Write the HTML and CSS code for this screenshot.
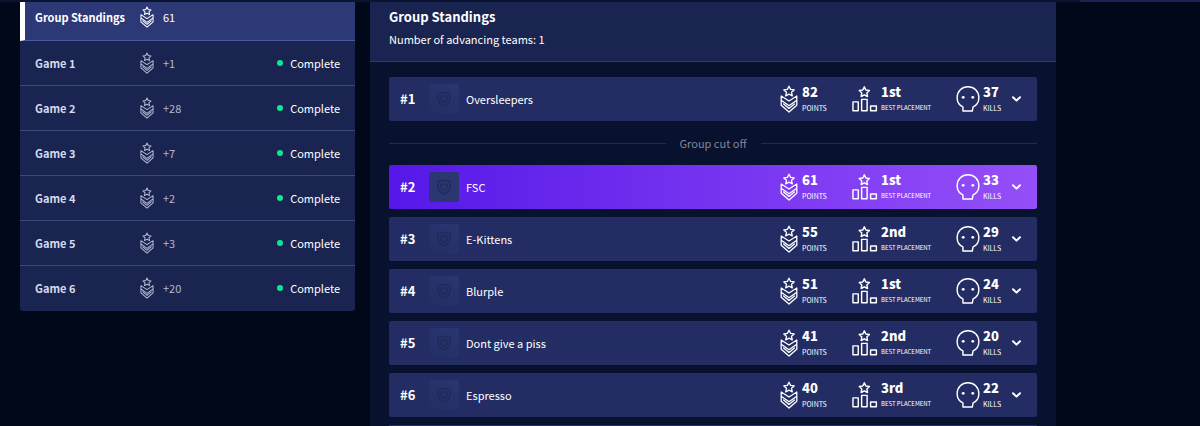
FILE: index.html
```html
<!DOCTYPE html>
<html lang="en">
<head>
<meta charset="utf-8">
<meta name="viewport" content="width=device-width, initial-scale=1">
<title>Group Standings</title>
<link rel="stylesheet" href="styles.css">
</head>
<body>
<svg class="sprite" aria-hidden="true">
  <symbol id="points" viewBox="0 0 18 28">
    <path d="M9 1.200l1.600 3.200 3.600.5-2.700 2.400.8 3.600L9 9.100l-3.300 1.800.8-3.600-2.700-2.400 3.600-.5z"/>
    <path d="M1.200 11v9.200L9 27l7.800-6.800V11L9 16zM1.200 15.200L9 20.800l7.800-5.600M3.600 18.900L9 23.400l5.400-4.500"/>
  </symbol>
  <symbol id="placement" viewBox="0 0 27 28">
    <path d="M12.800 1.400l1.600 3.300 3.700.5-2.700 2.500.7 3.700-3.300-1.800-3.300 1.800.7-3.700-2.700-2.500 3.700-.5z"/>
    <path d="M1 17h5.500v9.300H1zM10 14.400h5.700v11.900H10zM19.300 21.200h6v5.100h-6z"/>
  </symbol>
  <symbol id="kills" viewBox="0 0 25 28">
    <path d="M7.200 26.500v-4.200C3.600 20.600 1.200 17 1.200 12.700 1.200 6 6.200 1.200 12.500 1.200S23.800 6 23.800 12.700c0 4.300-2.400 7.900-6 9.600l-.8 4.200z"/>
    <circle class="eye" cx="7.500" cy="12.300" r="1.500"/><circle class="eye" cx="17.500" cy="12.300" r="1.500"/>
  </symbol>
  <symbol id="chevron" viewBox="0 0 10 6"><path d="M1.500 1.200L5 4.600l3.500-3.400"/></symbol>
  <symbol id="shield" viewBox="0 0 16 16"><path d="M2 2.500Q8 .500 14 2.500V8q0 4.500-6 7-6-2.500-6-7z"/><path d="M5 5.500q3-1 6 0V8q0 2-3 3.500Q5 10 5 8z"/></symbol>
</svg>
<div class="topline"></div>
<div class="layout">
  <nav class="games" aria-label="Games">
    <a class="game active" href="#standings"><b>Group Standings</b><svg class="ico-points"><use href="#points"/></svg><span class="score">61</span></a>
    <a class="game" href="#game1"><b>Game 1</b><svg class="ico-points"><use href="#points"/></svg><span class="score">+1</span><span class="status">Complete</span></a>
    <a class="game" href="#game2"><b>Game 2</b><svg class="ico-points"><use href="#points"/></svg><span class="score">+28</span><span class="status">Complete</span></a>
    <a class="game" href="#game3"><b>Game 3</b><svg class="ico-points"><use href="#points"/></svg><span class="score">+7</span><span class="status">Complete</span></a>
    <a class="game" href="#game4"><b>Game 4</b><svg class="ico-points"><use href="#points"/></svg><span class="score">+2</span><span class="status">Complete</span></a>
    <a class="game" href="#game5"><b>Game 5</b><svg class="ico-points"><use href="#points"/></svg><span class="score">+3</span><span class="status">Complete</span></a>
    <a class="game" href="#game6"><b>Game 6</b><svg class="ico-points"><use href="#points"/></svg><span class="score">+20</span><span class="status">Complete</span></a>
  </nav>
  <main class="standings" id="standings">
    <header class="head">
      <h1>Group Standings</h1>
      <p>Number of advancing teams: 1</p>
    </header>
    <div class="teams">
      <article class="team">
        <span class="rank">#1</span><span class="avatar"><svg><use href="#shield"/></svg></span><span class="name">Oversleepers</span>
        <div class="stat points"><svg class="ico-points"><use href="#points"/></svg><p><b>82</b><small>POINTS</small></p></div>
        <div class="stat placement"><svg class="ico-placement"><use href="#placement"/></svg><p><b>1st</b><small>BEST PLACEMENT</small></p></div>
        <div class="stat kills"><svg class="ico-kills"><use href="#kills"/></svg><p><b>37</b><small>KILLS</small></p></div>
        <button class="expand" aria-label="Show Oversleepers details"><svg><use href="#chevron"/></svg></button>
      </article>
      <div class="cutoff">Group cut off</div>
      <article class="team own">
        <span class="rank">#2</span><span class="avatar"><svg><use href="#shield"/></svg></span><span class="name">FSC</span>
        <div class="stat points"><svg class="ico-points"><use href="#points"/></svg><p><b>61</b><small>POINTS</small></p></div>
        <div class="stat placement"><svg class="ico-placement"><use href="#placement"/></svg><p><b>1st</b><small>BEST PLACEMENT</small></p></div>
        <div class="stat kills"><svg class="ico-kills"><use href="#kills"/></svg><p><b>33</b><small>KILLS</small></p></div>
        <button class="expand" aria-label="Show FSC details"><svg><use href="#chevron"/></svg></button>
      </article>
      <article class="team">
        <span class="rank">#3</span><span class="avatar"><svg><use href="#shield"/></svg></span><span class="name">E-Kittens</span>
        <div class="stat points"><svg class="ico-points"><use href="#points"/></svg><p><b>55</b><small>POINTS</small></p></div>
        <div class="stat placement"><svg class="ico-placement"><use href="#placement"/></svg><p><b>2nd</b><small>BEST PLACEMENT</small></p></div>
        <div class="stat kills"><svg class="ico-kills"><use href="#kills"/></svg><p><b>29</b><small>KILLS</small></p></div>
        <button class="expand" aria-label="Show E-Kittens details"><svg><use href="#chevron"/></svg></button>
      </article>
      <article class="team">
        <span class="rank">#4</span><span class="avatar"><svg><use href="#shield"/></svg></span><span class="name">Blurple</span>
        <div class="stat points"><svg class="ico-points"><use href="#points"/></svg><p><b>51</b><small>POINTS</small></p></div>
        <div class="stat placement"><svg class="ico-placement"><use href="#placement"/></svg><p><b>1st</b><small>BEST PLACEMENT</small></p></div>
        <div class="stat kills"><svg class="ico-kills"><use href="#kills"/></svg><p><b>24</b><small>KILLS</small></p></div>
        <button class="expand" aria-label="Show Blurple details"><svg><use href="#chevron"/></svg></button>
      </article>
      <article class="team">
        <span class="rank">#5</span><span class="avatar"><svg><use href="#shield"/></svg></span><span class="name">Dont give a piss</span>
        <div class="stat points"><svg class="ico-points"><use href="#points"/></svg><p><b>41</b><small>POINTS</small></p></div>
        <div class="stat placement"><svg class="ico-placement"><use href="#placement"/></svg><p><b>2nd</b><small>BEST PLACEMENT</small></p></div>
        <div class="stat kills"><svg class="ico-kills"><use href="#kills"/></svg><p><b>20</b><small>KILLS</small></p></div>
        <button class="expand" aria-label="Show Dont give a piss details"><svg><use href="#chevron"/></svg></button>
      </article>
      <article class="team">
        <span class="rank">#6</span><span class="avatar"><svg><use href="#shield"/></svg></span><span class="name">Espresso</span>
        <div class="stat points"><svg class="ico-points"><use href="#points"/></svg><p><b>40</b><small>POINTS</small></p></div>
        <div class="stat placement"><svg class="ico-placement"><use href="#placement"/></svg><p><b>3rd</b><small>BEST PLACEMENT</small></p></div>
        <div class="stat kills"><svg class="ico-kills"><use href="#kills"/></svg><p><b>22</b><small>KILLS</small></p></div>
        <button class="expand" aria-label="Show Espresso details"><svg><use href="#chevron"/></svg></button>
      </article>
      <div class="more"></div>
    </div>
  </main>
</div>
</body>
</html>
```
FILE: styles.css
```css
* { box-sizing: border-box; }
body {
  display: flex;
  flex-direction: column;
  margin: 0;
  min-height: 100vh;
  background: #00081a;
  color: #fff;
  font: 11px/16px "Noto Sans CJK SC", "Noto Sans", sans-serif;
}
h1, p { margin: 0; }
svg { display: block; flex: none; fill: none; stroke: currentColor; stroke-width: 1.5; stroke-linejoin: round; stroke-linecap: round; }
.sprite { position: absolute; width: 0; height: 0; }
.topline { height: 2px; background: linear-gradient(90deg, #0a1330 90%, #1b2450 90%); }
.layout {
  flex: 1;
  display: grid;
  grid-template-columns: minmax(0, 335fr) minmax(0, 686fr);
  gap: 15px;
  padding: 0 144px 0 20px;
}
.games { align-self: start; background: #1a2450; border-radius: 0 0 3px 3px; overflow: hidden; }
.game {
  display: grid;
  grid-template-columns: 105px 23px 1fr auto;
  align-items: center;
  height: 45px;
  padding: 0 15px 1px;
  border-bottom: 1px solid #3d4878;
  color: #b2b8d2;
  text-decoration: none;
}
.game:last-child { border-bottom: 0; }
.game b { color: #d5daee; }
.game .ico-points { width: 14px; height: 22px; }
.active { height: 39px; padding: 0 15px 8px 10px; border-left: 5px solid #fff; background: #2d3977; border-bottom-color: #4b5899; }
.active, .active b { color: #fff; }
.status { display: flex; align-items: center; gap: 7px; color: #fff; }
.status::before { content: ""; width: 6px; height: 6px; border-radius: 50%; background: #0ee895; }
.standings { background: #08122e; }
.head { height: 60px; padding: 5px 19px 0; background: #1a2450; border-bottom: 1px solid #303b66; }
.head h1 { font-size: 13px; line-height: 20px; margin-bottom: 4px; }
.teams { padding: 15px 19px 0; }
.team {
  display: flex;
  align-items: center;
  height: 44px;
  margin-bottom: 8px;
  padding: 0 15px 0 11px;
  border-radius: 2px;
  background: #232d63;
}
.own { background: linear-gradient(90deg, #5618e8, #954ff8); }
.more { height: 1px; background: #232d63; }
.rank { width: 29px; font-size: 13px; font-weight: 700; }
.avatar { display: grid; place-items: center; width: 30px; height: 30px; margin-right: 7px; border-radius: 2px; background: linear-gradient(30deg, #232d65, #2a3671); color: #202a5b; }
.own .avatar { background: #2c3670; color: #222c5c; }
.avatar svg { width: 16px; height: 16px; }
.name { flex: 1; }
.stat { display: flex; align-items: center; gap: 4px; }
.stat p { display: grid; }
.stat b { font-size: 13px; line-height: 18px; font-weight: 900; }
.stat small { font-size: 7px; line-height: 14px; white-space: nowrap; }
.placement small { font-size: 6px; }
.points { width: 72px; }
.placement { width: 104px; gap: 3px; }
.kills { width: 55px; gap: 3px; }
.ico-points { stroke-width: 1.3; }
.team .ico-points { width: 18px; height: 28px; }
.ico-placement { width: 26px; height: 28px; }
.ico-kills { width: 24px; height: 28px; }
.eye { fill: currentColor; stroke: none; }
.expand { padding: 0; border: 0; background: none; color: #fff; cursor: pointer; }
.expand svg { width: 11px; height: 6px; stroke-width: 2; }
.cutoff { display: flex; align-items: center; gap: 14px; height: 16px; margin: 14px 0; color: #7e879f; }
.cutoff::before, .cutoff::after { content: ""; flex: 1; height: 1px; background: #232c46; }
```
